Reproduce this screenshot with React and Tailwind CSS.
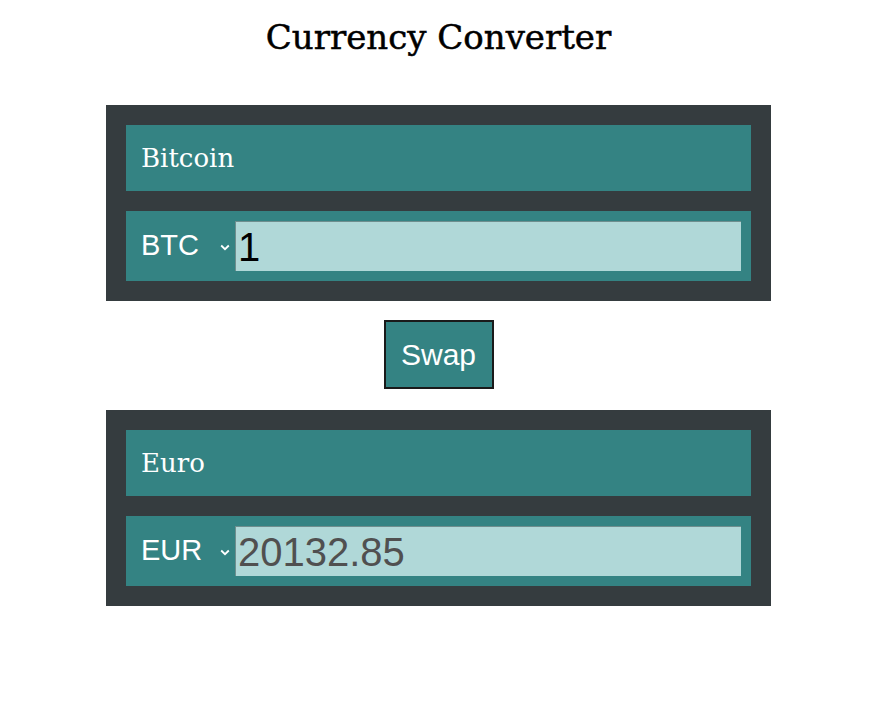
import { useState } from "react";

const RATE = 20132.85;
const SERIF = '"DejaVu Serif", serif';
const SANS = '"Liberation Sans", Arial, sans-serif';

function Chevron() {
  return (
    <svg width="10" height="7" viewBox="0 0 10 7" className="shrink-0 ml-[11px] mr-[5px] mt-[2px]">
      <path d="M1.2 1.5 L5 5.2 L8.8 1.5" fill="none" stroke="#fff" strokeWidth="1.8" />
    </svg>
  );
}

function CurrencyPanel({ name, code, value, readOnly }) {
  return (
    <div className="w-[665px] bg-[#353c3f] p-[20px] flex flex-col gap-[20px]">
      <div className="h-[66px] bg-[#348383] flex items-center px-[15px]">
        <span className="text-white text-[26px]" style={{ fontFamily: SERIF }}>
          {name}
        </span>
      </div>
      <div className="h-[70px] bg-[#348383] flex items-center pl-[15px] pr-[10px]">
        <span className="shrink-0 text-white text-[29px] w-[68px]" style={{ fontFamily: SANS }}>
          {code}
        </span>
        <Chevron />
        <input
          className={
            "min-w-0 flex-1 h-[50px] bg-[#b0d8d8] border-t border-l border-[#6e8e8e] outline-none px-[2px] text-[40px] " +
            (readOnly ? "text-[#505050]" : "text-black")
          }
          style={{ fontFamily: SANS }}
          value={value}
          readOnly={readOnly}
          onChange={() => {}}
        />
      </div>
    </div>
  );
}

export default function App() {
  const [amount] = useState("1");

  return (
    <div className="w-[877px] h-[706px] bg-white flex flex-col items-center">
      <h1
        className="mt-[16px] text-[34px] leading-[42px] text-black"
        style={{ fontFamily: SERIF, WebkitTextStroke: "0.5px #000" }}
      >
        Currency Converter
      </h1>
      <div className="mt-[47px]">
        <CurrencyPanel name="Bitcoin" code="BTC" value={amount} />
      </div>
      <button
        className="mt-[19px] w-[110px] h-[69px] bg-[#348383] border-2 border-[#1a1a1a] text-white text-[30px]"
        style={{ fontFamily: SANS }}
      >
        Swap
      </button>
      <div className="mt-[21px]">
        <CurrencyPanel name="Euro" code="EUR" value={RATE.toFixed(2)} readOnly />
      </div>
    </div>
  );
}
